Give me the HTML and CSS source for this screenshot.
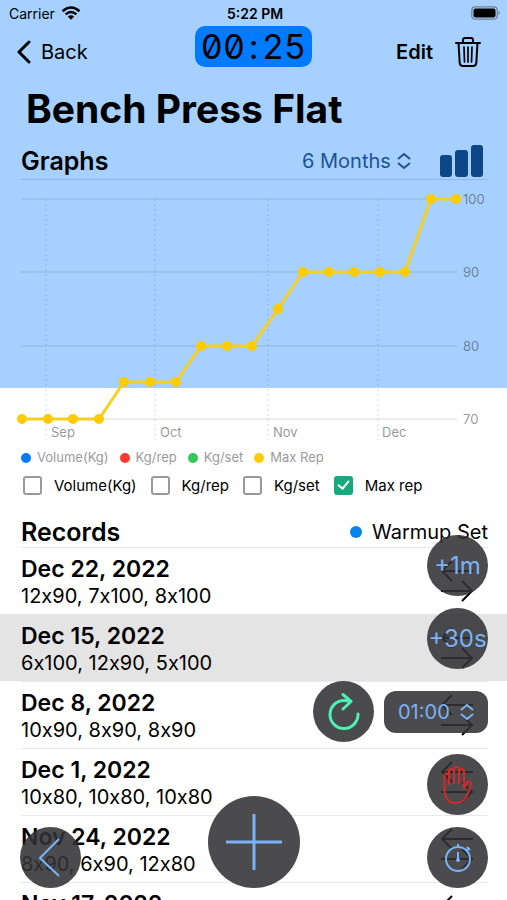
FILE: index.html
```html
<!DOCTYPE html>
<html lang="en">
  <head>
    <meta charset="UTF-8" />
    <meta name="viewport" content="width=device-width, initial-scale=1.0" />
    <title>Bench Press Flat</title>
    <link rel="stylesheet" href="styles.css">
  </head>
  <body>
    <svg class="defs" width="0" height="0" aria-hidden="true">
      <symbol id="swap" viewBox="0 0 34 44">
        <path d="M33 12H2M12 2L2 12L12 22M1 32H32M22 22L32 32L22 42" />
      </symbol>
      <symbol id="updown" viewBox="0 0 14 16">
        <path d="M1 6L7 1L13 6M1 10L7 15L13 10" />
      </symbol>
    </svg>

    <div class="status-bar">
      <span class="carrier">
        Carrier
        <svg width="20" height="14" viewBox="0 0 20 14">
          <path d="M1.500 5.200Q10-2.200 18.500 5.200M4.600 8.400Q10 3.600 15.400 8.400" fill="none" stroke="#000" stroke-width="2.500" />
          <path d="M6.800 10.500Q10 7.800 13.200 10.500L10 13.800Z" />
        </svg>
      </span>
      <span class="clock">5:22 PM</span>
      <svg class="battery" width="30" height="14" viewBox="0 0 30 14">
        <rect x="0.800" y="0.800" width="25.400" height="12.400" rx="3.500" fill="none" stroke="#6c8197" stroke-width="1.200" />
        <rect x="2.500" y="2.500" width="22" height="9" rx="2" />
        <path d="M27.500 4.500Q30 7 27.500 9.500Z" fill="#6c8197" />
      </svg>
    </div>

    <header class="nav">
      <button class="nav-button back">
        <svg width="14" height="24" viewBox="0 0 14 24">
          <path d="M12 2L2 12L12 22" fill="none" stroke="#000" stroke-width="3" stroke-linecap="round" stroke-linejoin="round" />
        </svg>
        Back
      </button>
      <div class="timer">00<span>:</span>25</div>
      <div class="nav-actions">
        <button class="nav-button edit">Edit</button>
        <button class="nav-button" aria-label="Delete">
          <svg width="26" height="30" viewBox="0 0 26 30">
            <g fill="none" stroke="#000" stroke-width="2" stroke-linecap="round" stroke-linejoin="round">
              <path d="M1 6H25M8 6V3Q8 1 10 1H16Q18 1 18 3V6" />
              <path d="M3.500 6L4.700 26Q5 29 8 29H18Q21 29 21.300 26L22.500 6" />
              <path d="M9 10L9.500 25M13 10V25M17 10L16.500 25" stroke-width="1.700" />
            </g>
          </svg>
        </button>
      </div>
    </header>

    <main>
      <h1>Bench Press Flat</h1>

      <section class="graphs">
        <div class="section-head graphs-head">
          <h2>Graphs</h2>
          <div class="period">
            <select aria-label="Period">
              <option>6 Months</option>
              <option>1 Year</option>
            </select>
            <svg class="updown" width="14" height="16"><use href="#updown" /></svg>
          </div>
          <button class="nav-button" aria-label="Chart type">
            <svg width="43" height="32" viewBox="0 0 43 32" fill="#0d4787">
              <rect x="0" y="10" width="12" height="22" rx="3" />
              <rect x="15" y="5" width="13" height="27" rx="3" />
              <rect x="31" y="0" width="12" height="32" rx="3" />
            </svg>
          </button>
        </div>

        <svg class="chart" viewBox="0 0 467 265">
          <marker id="dot" viewBox="0 0 10 10" refX="5" refY="5" markerWidth="10" markerHeight="10" markerUnits="userSpaceOnUse">
            <circle cx="5" cy="5" r="5" fill="#ffcc00" />
          </marker>
          <path class="grid" d="M0 19H436M0 92H436M0 166H436M0 239H436" />
          <path class="grid dotted" d="M25 19V260M134 19V260M247 19V260M357 19V260" />
          <polyline class="line" points="1,239 27,239 52,239 78,239 103,202 129,202 155,202 180,166 206,166 231,166 257,129 282,92 308,92 333,92 359,92 384,92 410,19 435,19" />
          <text x="442" y="24">100</text>
          <text x="442" y="97">90</text>
          <text x="442" y="171">80</text>
          <text x="442" y="244">70</text>
          <text x="30" y="257">Sep</text>
          <text x="139" y="257">Oct</text>
          <text x="252" y="257">Nov</text>
          <text x="361" y="257">Dec</text>
        </svg>

        <ul class="legend">
          <li class="volume">Volume(Kg)</li>
          <li class="rep">Kg/rep</li>
          <li class="set">Kg/set</li>
          <li class="max">Max Rep</li>
        </ul>

        <div class="toggles">
          <label><input type="checkbox" /> Volume(Kg)</label>
          <label><input type="checkbox" /> Kg/rep</label>
          <label><input type="checkbox" /> Kg/set</label>
          <label><input type="checkbox" checked /> Max rep</label>
        </div>
      </section>

      <section>
        <div class="section-head">
          <h2>Records</h2>
          <span class="warmup">Warmup Set</span>
        </div>
        <ul class="records">
          <li>
            <div class="record">
              <div><h3>Dec 22, 2022</h3><p>12x90, 7x100, 8x100</p></div>
              <svg class="swap"><use href="#swap" /></svg>
            </div>
          </li>
          <li class="selected">
            <div class="record">
              <div><h3>Dec 15, 2022</h3><p>6x100, 12x90, 5x100</p></div>
              <svg class="swap"><use href="#swap" /></svg>
            </div>
          </li>
          <li>
            <div class="record">
              <div><h3>Dec 8, 2022</h3><p>10x90, 8x90, 8x90</p></div>
              <svg class="swap"><use href="#swap" /></svg>
            </div>
          </li>
          <li>
            <div class="record">
              <div><h3>Dec 1, 2022</h3><p>10x80, 10x80, 10x80</p></div>
              <svg class="swap"><use href="#swap" /></svg>
            </div>
          </li>
          <li>
            <div class="record">
              <div><h3>Nov 24, 2022</h3><p>8x90, 6x90, 12x80</p></div>
              <svg class="swap"><use href="#swap" /></svg>
            </div>
          </li>
          <li>
            <div class="record">
              <div><h3>Nov 17, 2022</h3></div>
              <svg class="swap"><use href="#swap" /></svg>
            </div>
          </li>
        </ul>
      </section>
    </main>

    <!-- floating timer controls -->
    <div class="controls">
      <button class="round" aria-label="Previous">
        <svg width="24" height="40" viewBox="0 0 24 40"><path d="M20 1L1 20L20 38" /></svg>
      </button>
      <button class="round add" aria-label="Add set">
        <svg width="58" height="58" viewBox="0 0 58 58"><path d="M29 1V57M1 29H57" /></svg>
      </button>
      <div class="timer-controls">
        <button class="round">+1m</button>
        <button class="round">+30s</button>
        <div class="rest-row">
          <button class="round restart" aria-label="Restart">
            <svg width="32" height="38" viewBox="0 0 32 38">
              <path d="M30 21A14 14 0 1 1 16 7.500Q19 7.500 23 8.500M15 1.500L23 8.500L15 16" stroke-linecap="round" stroke-linejoin="round" />
            </svg>
          </button>
          <div class="rest-time">
            <select aria-label="Rest time">
              <option>01:00</option>
              <option>02:00</option>
            </select>
            <svg class="updown" width="14" height="16"><use href="#updown" /></svg>
          </div>
        </div>
        <button class="round stop" aria-label="Stop">
          <svg width="30" height="38" viewBox="0 0 30 38">
            <g stroke-linecap="round" stroke-linejoin="round">
              <path d="M1.500 24V9.500Q1.500 7.500 3.800 7.500Q6 7.500 6 9.500V18" />
              <path d="M6 17V5Q6 3 8.500 3Q11 3 11 5V17" />
              <path d="M11 17V3Q11 1 13.500 1Q16 1 16 3V17" />
              <path d="M16 17V5Q16 3 18.500 3Q21 3 21 5V22" />
              <path d="M1.500 24C1.500 32 6 37 13 37C19 37 23 33 25 27L28 19C29 16 25.500 14.500 24 17L21 22" />
            </g>
          </svg>
        </button>
        <button class="round" aria-label="Stopwatch">
          <svg width="28" height="28" viewBox="0 0 28 28">
            <circle cx="14" cy="15" r="12" />
            <path d="M14 3V0M22.500 6.500L25 4M23 3L26 6M14 8V15" />
            <circle cx="14" cy="16" r="1" />
          </svg>
        </button>
      </div>
    </div>
  </body>
</html>
```
FILE: styles.css
```css
* {
  box-sizing: border-box;
}

body {
  font-family: Inter, "Liberation Sans", sans-serif;
  margin: 0;
  height: 100vh;
  overflow: hidden;
  position: relative;
  color: #000;
  background: linear-gradient(#a6d0ff 388px, #fff 388px);
}

h1,
h2,
h3,
p,
ul {
  margin: 0;
  padding: 0;
}

ul {
  list-style: none;
}

button,
select {
  font-family: inherit;
  border: none;
  padding: 0;
  cursor: pointer;
}

svg {
  display: block;
}

.defs {
  position: absolute;
}

/* status bar and navigation */
.status-bar {
  display: grid;
  grid-template-columns: 1fr auto 1fr;
  align-items: center;
  height: 26px;
  padding: 0 6px 0 9px;
  font-size: 14px;
}

.carrier {
  display: flex;
  align-items: center;
  gap: 6px;
}

.clock {
  font-weight: 600;
}

.battery {
  justify-self: end;
}

.nav {
  display: grid;
  grid-template-columns: 1fr auto 1fr;
  align-items: center;
  height: 52px;
  padding: 0 26px 0 26px;
}

.nav-button {
  display: flex;
  align-items: center;
  background: none;
  color: #000;
  font-size: 20px;
}

.back {
  gap: 10px;
  margin-left: -9px;
}

.timer {
  align-self: start;
  height: 41px;
  padding: 0 6px;
  border-radius: 10px;
  background: #007aff;
  font-size: 34px;
  line-height: 41px;
  font-feature-settings: "zero", "tnum";
}

.timer span {
  padding: 0 4px;
}

.nav-actions {
  display: flex;
  justify-content: flex-end;
  align-items: center;
  gap: 22px;
}

.edit {
  font-weight: 600;
}

h1 {
  padding: 0 26px;
  font-size: 39px;
  line-height: 62px;
  font-weight: 700;
}

h2 {
  font-size: 25px;
  line-height: 30px;
  font-weight: 600;
}

.section-head {
  display: flex;
  align-items: center;
  justify-content: space-between;
  height: 31px;
  margin: 0 19px 0 21px;
}

/* graphs */
.graphs {
  margin-bottom: 16px;
}

.graphs-head {
  height: 40px;
  padding: 3px 5px 0 0;
  border-bottom: 1px solid rgba(60, 60, 67, 0.15);
}

.period {
  display: flex;
  align-items: center;
  gap: 6px;
  margin-left: auto;
  margin-right: 29px;
  color: #205395;
}

select {
  appearance: none;
  background: none;
  color: inherit;
  font-size: 20px;
}

.updown {
  fill: none;
  stroke: currentColor;
  stroke-width: 2;
  pointer-events: none;
}

.chart {
  width: calc(100% - 40px);
  margin-left: 21px;
  overflow: visible;
}

.grid {
  fill: none;
  stroke: rgba(60, 60, 67, 0.18);
}

.dotted {
  stroke-dasharray: 2 3;
}

.line {
  fill: none;
  stroke: #f5d020;
  stroke-width: 3;
  marker: url(#dot);
}

.chart text {
  fill: rgba(60, 60, 67, 0.55);
  font-size: 13px;
}

.legend {
  display: flex;
  gap: 11px;
  padding-left: 21px;
  color: #9a9a9d;
  font-size: 13px;
  line-height: 25px;
}

.legend li,
.warmup {
  display: flex;
  align-items: center;
  gap: 6px;
}

.legend li::before,
.warmup::before {
  content: "";
  width: 10px;
  height: 10px;
  border-radius: 50%;
  background: #007aff;
}

.legend .rep::before {
  background: #ff3b30;
}

.legend .set::before {
  background: #34c759;
}

.legend .max::before {
  background: #ffcc00;
}

.toggles {
  display: flex;
  gap: 14px;
  height: 30px;
  padding-left: 23px;
  font-size: 15px;
}

.toggles label {
  display: flex;
  align-items: center;
  gap: 12px;
}

.toggles input {
  appearance: none;
  width: 19px;
  height: 19px;
  margin: 0;
  border: 2px solid #999;
  border-radius: 3px;
  background: #fff;
}

.toggles input:checked {
  display: grid;
  place-items: center;
  border-color: #16ab7c;
  background: #16ab7c;
}

.toggles input:checked::after {
  content: "";
  width: 5px;
  height: 9px;
  margin-bottom: 3px;
  border: solid #fff;
  border-width: 0 2px 2px 0;
  transform: rotate(40deg);
}

/* records */
.warmup {
  gap: 10px;
  font-size: 20px;
}

.warmup::before {
  width: 12px;
  height: 12px;
  background: #0a84ea;
}

.records li {
  padding: 0 19px 0 21px;
}

.records .selected {
  background: #e4e4e4;
}

.record {
  display: flex;
  justify-content: space-between;
  height: 67px;
  padding: 7px 14px 0 0;
  border-top: 1px solid #e8e8ea;
  font-feature-settings: "calt" 0;
}

.selected .record {
  border-color: #e4e4e4;
}

.record h3 {
  font-size: 23px;
  line-height: 28px;
  font-weight: 600;
}

.record p {
  font-size: 20px;
  line-height: 26px;
}

.swap {
  width: 34px;
  height: 44px;
  margin-top: 4px;
  fill: none;
  stroke: #000;
  stroke-width: 2;
}

/* floating controls */
.controls {
  position: absolute;
  left: 20px;
  right: 19px;
  bottom: 12px;
  display: grid;
  grid-template-columns: 1fr auto 1fr;
  align-items: end;
}

.round {
  display: flex;
  justify-content: center;
  align-items: center;
  width: 61px;
  height: 61px;
  border-radius: 50%;
  background: rgba(50, 50, 52, 0.88);
  color: #79b2f7;
  font-size: 24px;
  white-space: nowrap;
}

.round svg {
  fill: none;
  stroke: currentColor;
  stroke-width: 2;
}

.add {
  width: 92px;
  height: 92px;
}

.round.add svg,
.round.restart svg {
  stroke-width: 3;
}

.timer-controls {
  display: flex;
  flex-direction: column;
  align-items: flex-end;
  gap: 12px;
}

.rest-row {
  display: flex;
  align-items: center;
  gap: 10px;
}

.restart {
  color: #4df0b5;
}

.stop {
  color: #d62828;
}

.rest-time {
  display: flex;
  justify-content: center;
  align-items: center;
  gap: 6px;
  width: 104px;
  height: 42px;
  border-radius: 12px;
  background: rgba(50, 50, 52, 0.88);
  color: #79b2f7;
}
```
